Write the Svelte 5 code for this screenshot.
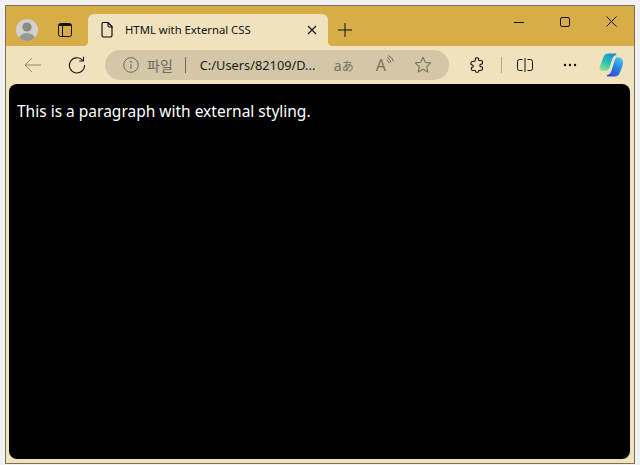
<script>
	const title = 'HTML with External CSS';
	const url = 'C:/Users/82109/D...';
</script>

<div class="desktop">
	<div class="window">
		<header class="titlebar">
			<button class="avatar" aria-label="Profile">
				<svg viewBox="0 0 22 22" width="22" height="22">
					<defs><clipPath id="round"><circle cx="11" cy="11" r="11" /></clipPath></defs>
					<g clip-path="url(#round)">
						<rect width="22" height="22" fill="#d2d0cb" />
						<circle cx="11" cy="8" r="4.6" fill="#8b8984" />
						<ellipse cx="11" cy="20" rx="8" ry="6" fill="#9a9894" />
					</g>
				</svg>
			</button>
			<button class="tabs-btn" aria-label="Tab actions">
				<svg viewBox="0 0 14 14" width="14" height="14" fill="none" stroke="#111" stroke-width="1">
					<rect x="0.5" y="0.5" width="13" height="13" rx="2" />
					<path d="M1 1.5h12M1 2.5h12" />
					<path d="M4.5 3v10.5" />
				</svg>
			</button>
			<div class="tab">
				<svg class="doc" viewBox="0 0 12 16" width="12" height="16" fill="none" stroke="#000" stroke-width="1.100">
					<path d="M1 2a1.500 1.500 0 0 1 1.500-1.500h4.500l4 4v9a1.500 1.500 0 0 1-1.500 1.500h-7a1.500 1.500 0 0 1-1.500-1.500z" />
					<path d="M7 0.500v3a1.500 1.500 0 0 0 1.500 1.500h3" />
				</svg>
				<span class="tab-title">{title}</span>
				<svg class="tab-close" viewBox="0 0 10 10" width="10" height="10" stroke="#111" stroke-width="1.100">
					<path d="M1 1l8 8M9 1l-8 8" />
				</svg>
			</div>
			<button class="new-tab" aria-label="New tab">
				<svg viewBox="0 0 14 14" width="14" height="14" stroke="#111" stroke-width="1">
					<path d="M7 0v14M0 7h14" />
				</svg>
			</button>
			<div class="controls">
				<svg viewBox="0 0 10 10" width="10" height="10" stroke="#111" stroke-width="1"><path d="M0 5.500h10" /></svg>
				<svg viewBox="0 0 10 10" width="10" height="10" fill="none" stroke="#111" stroke-width="1"><rect x="0.500" y="0.500" width="9" height="9" rx="1.500" /></svg>
				<svg viewBox="0 0 11 11" width="11" height="11" stroke="#111" stroke-width="1"><path d="M0.500 0.500l10 10M10.500 0.500l-10 10" /></svg>
			</div>
		</header>

		<nav class="toolbar">
			<button class="nav-btn back" aria-label="Back">
				<svg viewBox="0 0 18 16" width="18" height="16" fill="none" stroke="#8f8775" stroke-width="1">
					<path d="M17 8H1M8 1L1 8l7 7" />
				</svg>
			</button>
			<button class="nav-btn reload" aria-label="Reload">
				<svg viewBox="0 0 18 18" width="18" height="18" fill="none" stroke="#111" stroke-width="1.100">
					<path d="M14.800 4.400A7.600 7.600 0 1 0 16.600 9" />
					<path d="M15.500 0.800v4.200h-4.200" />
				</svg>
			</button>
			<div class="address">
				<svg class="info" viewBox="0 0 16 16" width="16" height="16" fill="none" stroke="#6f6a5c" stroke-width="1">
					<circle cx="8" cy="8" r="7.300" />
					<path d="M8 7v5" />
					<circle cx="8" cy="4.800" r="0.500" fill="#6f6a5c" />
				</svg>
				<span class="scheme">파일</span>
				<span class="divider"></span>
				<span class="url">{url}</span>
				<span class="translate"><span>a</span><span class="kana">あ</span></span>
				<span class="read">
					<span class="read-a">A</span>
					<svg viewBox="0 0 8 10" width="8" height="10" fill="none" stroke="#77725f" stroke-width="1">
						<path d="M0.500 5a3.500 3.500 0 0 1 2.500 3M1 2.500a6 6 0 0 1 4 5M2 0.500a8 8 0 0 1 5.500 6" />
					</svg>
				</span>
				<svg class="star" viewBox="0 0 18 18" width="18" height="18" fill="none" stroke="#77725f" stroke-width="1.100" stroke-linejoin="round">
					<path d="M9 1.300l2.300 5 5.400 0.600-4 3.700 1.100 5.400L9 13.300l-4.800 2.700 1.100-5.400-4-3.700 5.400-0.600z" />
				</svg>
			</div>
			<div class="tools">
				<svg class="ext" viewBox="0 0 16 16" width="16" height="16" fill="none" stroke="#111" stroke-width="1.100" stroke-linejoin="round">
					<path d="M6.500 1.500c.4-1 2.600-1 3 0 .2.700 0 1.500.3 1.800.5.300 2 0 3 .5.900.6.800 2 .5 3 -.2.500-.9.300-1.500.4-1.300.2-1.300 2.300 0 2.500.6.100 1.300 0 1.500.4.300 1 .4 2.400-.5 3-1 .5-2.500.3-3 .5-.3.300 0 .8-.3 1.200-.6.500-2 .5-2.700.1-.5-.4-.2-1-.5-1.300-.5-.3-2 0-3-.3-1-.4-1-1.700-.7-2.500.2-.5.800-.5 1.200-.7.800-.5.800-1.500 0-2-.5-.2-1.400-.2-1.700-.7-.3-.8-.2-2.200.7-2.800 1-.5 2.600-.2 3.200-.5.300-.3 0-.8.300-1.100z" />
				</svg>
				<span class="tool-sep"></span>
				<svg class="split" viewBox="0 0 16 14" width="16" height="14" fill="none" stroke="#111" stroke-width="1">
					<path d="M5.500 1.500h-3a2 2 0 0 0-2 2v7a2 2 0 0 0 2 2h3M10.500 1.500h3a2 2 0 0 1 2 2v7a2 2 0 0 1-2 2h-3M8 0v14" />
				</svg>
				<svg class="dots" viewBox="0 0 14 4" width="14" height="4" fill="#111">
					<circle cx="2" cy="2" r="1.200" /><circle cx="7" cy="2" r="1.200" /><circle cx="12" cy="2" r="1.200" />
				</svg>
				<svg class="copilot" viewBox="0 0 24 24" width="24" height="24">
					<defs>
						<linearGradient id="cp-a" x1="0.700" y1="0" x2="0.200" y2="1">
							<stop offset="0" stop-color="#1a8fd0" />
							<stop offset="0.550" stop-color="#2fc4b2" />
							<stop offset="1" stop-color="#9fe28a" />
						</linearGradient>
						<linearGradient id="cp-b" x1="0.800" y1="0" x2="0.300" y2="1">
							<stop offset="0" stop-color="#4ec3f0" />
							<stop offset="0.550" stop-color="#1f7fe6" />
							<stop offset="1" stop-color="#3a4bd2" />
						</linearGradient>
					</defs>
					<path d="M9.500 0.500h6.800c1.200 0 1.400.9.800 1.500-1.800.6-3 1.700-3.600 3.500l-3 9c-.7 2-2.200 3.500-4.500 3.500H3C1 18 0 16.500.5 14.500l3.700-10C5 2 6.800.5 9.500.5z" fill="url(#cp-a)" />
					<path d="M17 4.500h2.800c2.200 0 3.500 1.500 3.900 3.500.4 1.800.4 3 0 4.500l-3 7.500c-.8 2.300-2.400 3.500-4.700 3.500H9c-1.200 0-1.500-1-.8-1.500 2-.5 3.400-1.800 4-3.500l3-9.500c.4-1.500 1-3.200 1.800-4.500z" fill="url(#cp-b)" />
				</svg>
			</div>
		</nav>

		<main class="page">
			<p>This is a paragraph with external styling.</p>
		</main>
	</div>
</div>

<style>
	:global(body) {
		margin: 0;
		background: #f1f1f1;
	}

	.desktop {
		width: 640px;
		height: 465px;
		padding: 5px 5px 1px 5px;
		box-sizing: border-box;
		overflow: hidden;
	}

	.window {
		height: 100%;
		box-sizing: border-box;
		display: flex;
		flex-direction: column;
		background: #f0e2bd;
		border: 1px solid #77705f;
		font-family: 'Noto Sans', 'Open Sans', sans-serif;
		color: #111;
	}

	button {
		border: 0;
		padding: 0;
		background: none;
		display: flex;
		align-items: center;
		justify-content: center;
	}

	svg {
		display: block;
		flex: none;
	}

	.titlebar {
		height: 40px;
		flex: none;
		display: flex;
		align-items: flex-end;
		background: #d6ad47;
	}

	.avatar {
		margin: 0 0 5px 10px;
	}

	.tabs-btn {
		margin: 0 0 9px 20px;
	}

	.tab {
		position: relative;
		width: 240px;
		height: 32px;
		margin-left: 16px;
		box-sizing: border-box;
		padding: 0 11px 1px 13px;
		display: flex;
		align-items: center;
		background: #f0e2bd;
		border-radius: 6px 6px 0 0;
	}

	.tab::before,
	.tab::after {
		content: '';
		position: absolute;
		bottom: 0;
		width: 4px;
		height: 4px;
	}

	.tab::before {
		left: -4px;
		background: radial-gradient(circle at 0 0, #d6ad47 3.500px, #f0e2bd 4px);
	}

	.tab::after {
		right: -4px;
		background: radial-gradient(circle at 100% 0, #d6ad47 3.500px, #f0e2bd 4px);
	}

	.tab-title {
		flex: 1;
		margin-left: 12px;
		font-size: 11.300px;
		white-space: nowrap;
		overflow: hidden;
	}

	.new-tab {
		margin: 0 0 9px 10px;
	}

	.controls {
		margin-left: auto;
		align-self: flex-start;
		display: flex;
		align-items: center;
		gap: 36px;
		padding: 10px 17px 0 0;
	}

	.toolbar {
		height: 38px;
		flex: none;
		display: flex;
		align-items: center;
	}

	.back {
		margin-left: 18px;
	}

	.reload {
		margin-left: 26px;
	}

	.address {
		width: 344px;
		height: 30px;
		margin-left: 19px;
		flex: none;
		box-sizing: border-box;
		padding: 0 0 0 18px;
		display: flex;
		align-items: center;
		background: #d3c7a8;
		border-radius: 15px;
		font-size: 12px;
	}

	.scheme {
		flex: none;
		margin-left: 8px;
		font-size: 14px;
		white-space: nowrap;
		color: #6f6a5c;
		font-family: 'Noto Sans CJK KR', sans-serif;
	}

	.divider {
		flex: none;
		width: 1px;
		height: 16px;
		margin: 0 14px 0 12px;
		background: #6f6a5c;
	}

	.url {
		flex: none;
		width: 126px;
		white-space: nowrap;
		color: #1a1a1a;
		font-size: 12.800px;
	}

	.translate {
		flex: none;
		display: flex;
		align-items: baseline;
		margin-left: 8px;
		font-size: 14px;
		color: #77725f;
	}

	.kana {
		font-size: 12px;
		font-family: 'Noto Sans CJK JP', sans-serif;
	}

	.read {
		flex: none;
		display: flex;
		align-items: flex-start;
		margin-left: 22px;
		color: #77725f;
	}

	.read-a {
		font-size: 16px;
		line-height: 20px;
	}

	.star {
		margin-left: 20px;
	}

	.tools {
		display: flex;
		align-items: center;
		margin-left: 20px;
	}

	.tool-sep {
		width: 1px;
		height: 16px;
		margin: 0 15px 0 16px;
		background: #b5a98c;
	}

	.dots {
		margin-left: 30px;
	}

	.copilot {
		margin-left: 22px;
	}

	.page {
		flex: 1;
		margin: 0 4px 4px 3px;
		background: #000;
		border-radius: 8px;
		color: #fff;
		font-family: 'Noto Sans', sans-serif;
		font-size: 15.500px;
	}

	p {
		margin: 16px 8px;
		line-height: 22px;
		white-space: nowrap;
	}
</style>
